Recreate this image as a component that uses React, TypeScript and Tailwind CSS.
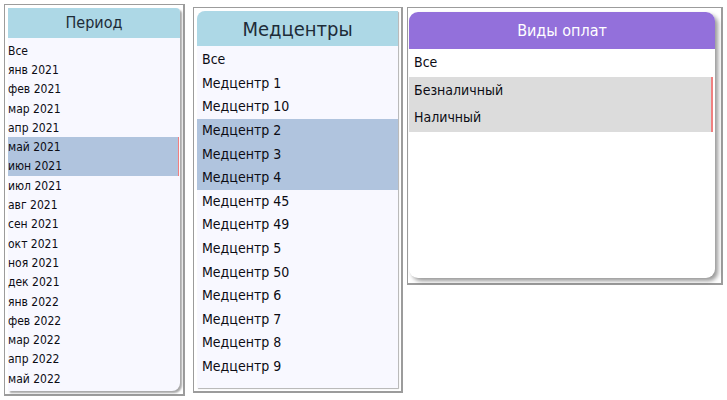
const periods = [
  'Все', 'янв 2021', 'фев 2021', 'мар 2021', 'апр 2021', 'май 2021', 'июн 2021', 'июл 2021',
  'авг 2021', 'сен 2021', 'окт 2021', 'ноя 2021', 'дек 2021', 'янв 2022', 'фев 2022',
  'мар 2022', 'апр 2022', 'май 2022',
];
const selectedPeriods = ['май 2021', 'июн 2021'];

const centers = [
  'Все', 'Медцентр 1', 'Медцентр 10', 'Медцентр 2', 'Медцентр 3', 'Медцентр 4', 'Медцентр 45',
  'Медцентр 49', 'Медцентр 5', 'Медцентр 50', 'Медцентр 6', 'Медцентр 7', 'Медцентр 8', 'Медцентр 9',
];
const selectedCenters = ['Медцентр 2', 'Медцентр 3', 'Медцентр 4'];

const payments = ['Все', 'Безналичный', 'Наличный'];
const selectedPayments = ['Безналичный', 'Наличный'];

const font = { fontFamily: '"DejaVu Sans Condensed", "DejaVu Sans", Tahoma, sans-serif' };

export default function App() {
  return (
    <div className="flex items-start w-[727px] h-[400px] bg-white text-[#0c0c14]" style={font}>
      {/* Период */}
      <div className="ml-[4px] mt-[4px] w-[181px] h-[392px] border border-r-2 border-b-2 border-[#9c9c9c] p-[3px] bg-white">
        <div className="h-full rounded-tr-[4px] rounded-br-[8px] bg-[#f8f8ff] shadow-[2px_2px_2px_rgba(0,0,0,0.35)] overflow-hidden">
          <div className="h-[30px] bg-[#add8e6] flex items-center justify-center text-[16px] text-[#1e2c38]">
            Период
          </div>
          <div className="pt-[3px]">
            {periods.map((p) => {
              const sel = selectedPeriods.includes(p);
              return (
                <div
                  key={p}
                  className={
                    sel
                      ? 'h-[19.3px] flex items-center text-[12px] bg-[#b0c4de] border-r border-[#f08080] mr-[1px]'
                      : 'h-[19.3px] flex items-center text-[12px]'
                  }
                >
                  {p}
                </div>
              );
            })}
          </div>
        </div>
      </div>

      {/* Медцентры */}
      <div className="ml-[8px] mt-[7px] w-[210px] h-[386px] border border-r-2 border-b-2 border-[#9c9c9c] p-[3px] bg-white">
        <div className="h-full rounded-tl-[8px] bg-[#f8f8ff] shadow-[1px_1px_1px_rgba(0,0,0,0.3)] overflow-hidden">
          <div className="h-[35px] bg-[#add8e6] flex items-center justify-center text-[20px] text-[#1e2c38]">
            Медцентры
          </div>
          <div className="pt-[2px]">
            {centers.map((c) => (
              <div
                key={c}
                className={
                  selectedCenters.includes(c)
                    ? 'h-[23.6px] flex items-center px-[5px] text-[14px] bg-[#b0c4de]'
                    : 'h-[23.6px] flex items-center px-[5px] text-[14px]'
                }
              >
                {c}
              </div>
            ))}
          </div>
        </div>
      </div>

      {/* Виды оплат */}
      <div className="ml-[4px] mt-[7px] w-[316px] h-[278px] border border-r-2 border-b-2 border-[#9c9c9c] pl-[1px] pt-[4px] pr-[6px] pb-[5px] bg-white">
        <div className="h-full rounded-[9px] bg-white shadow-[3px_3px_4px_rgba(0,0,0,0.4)] overflow-hidden">
          <div className="h-[37px] bg-[#9370db] flex items-center justify-center text-[16px] text-white">
            Виды оплат
          </div>
          <div>
            {payments.map((p) => (
              <div
                key={p}
                className={
                  selectedPayments.includes(p)
                    ? 'h-[27.5px] flex items-center px-[5px] text-[14px] bg-[#dcdcdc] border-r-2 border-[#f08080] mr-[2px]'
                    : 'h-[27.5px] flex items-center px-[5px] text-[14px]'
                }
              >
                {p}
              </div>
            ))}
          </div>
        </div>
      </div>
    </div>
  );
}
